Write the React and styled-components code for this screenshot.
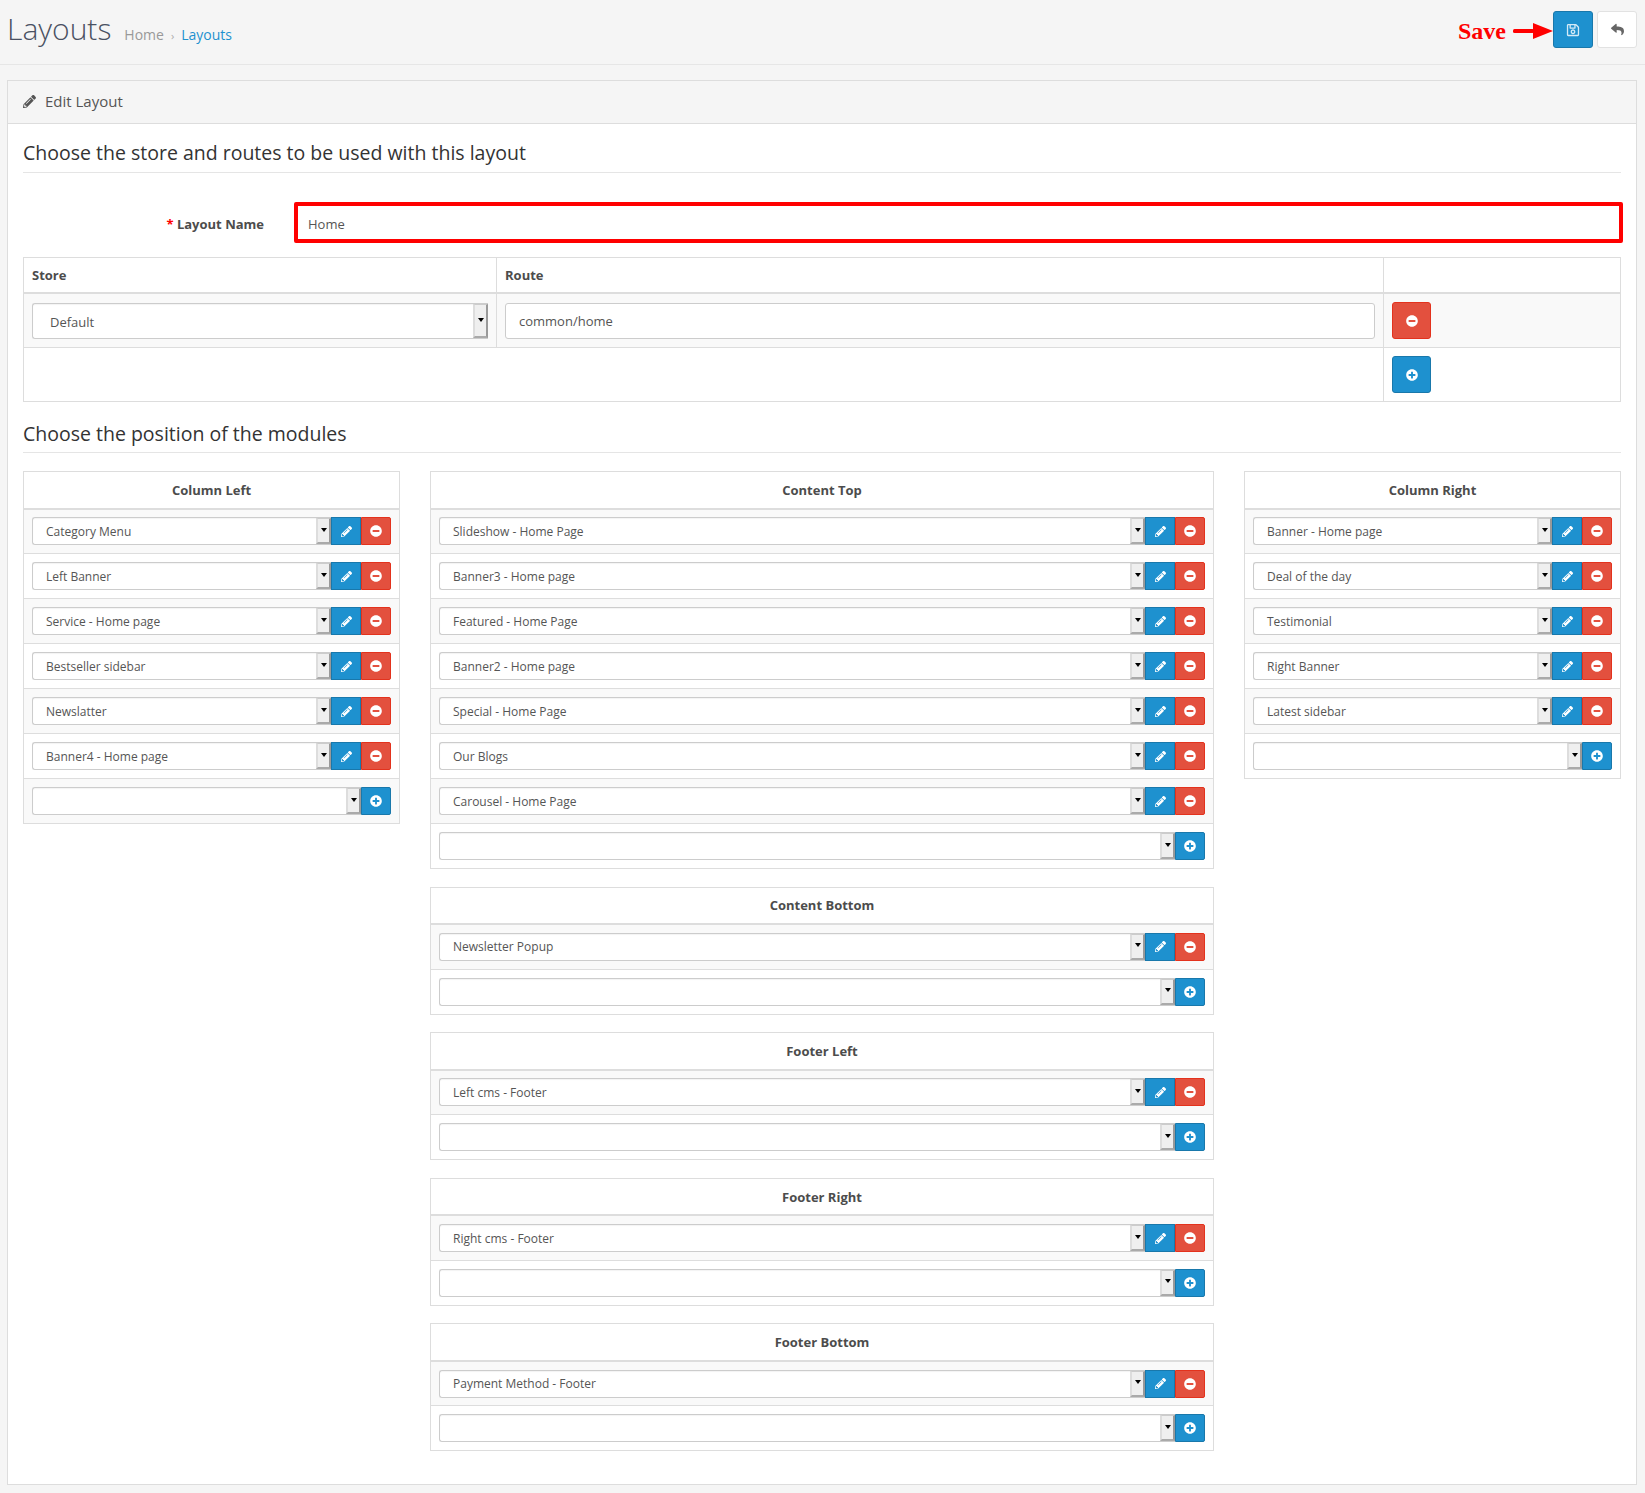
import React from 'react';
import styled, { createGlobalStyle } from 'styled-components';
import { FaPencilAlt, FaMinusCircle, FaPlusCircle, FaRegSave, FaReply } from 'react-icons/fa';

const Global = createGlobalStyle`
  html, body { margin: 0; padding: 0; background: #f5f5f5; }
  body { font-family: "Open Sans", "Liberation Sans", sans-serif; font-size: 12px; color: #555; }
  * { box-sizing: border-box; }
`;

const Page = styled.div`
  width: 1645px;
  height: 1493px;
  overflow: hidden;
`;
const PageHeader = styled.header`
  height: 65px;
  border-bottom: 1px solid #e6e6e6;
  margin-bottom: 15px;
  padding: 11px 8px 0 7px;
  display: flex;
  align-items: flex-start;
  justify-content: space-between;
`;
const TitleGroup = styled.div`
  display: flex;
  align-items: baseline;
  height: 37px;
  margin-top: -1px;
`;
const Title = styled.h1`
  margin: 0;
  font-size: 30px;
  line-height: 37px;
  font-weight: 300;
  color: #4a5162;
`;
const Crumbs = styled.div`
  margin-left: 13px;
  font-size: 14px;
  color: #999;
  display: flex;
  gap: 7px;
  align-items: baseline;
`;
const CrumbSep = styled.span`
  font-size: 11px;
  color: #aaa;
`;
const CrumbLink = styled.span`
  color: #1e91cf;
`;
const Toolbar = styled.div`
  display: flex;
  align-items: center;
`;
const SaveNote = styled.span`
  font-family: "Liberation Serif", serif;
  font-weight: 700;
  font-size: 24px;
  color: #f00;
  margin-right: 7px;
  padding-top: 4px;
`;
const ArrowMark = styled.svg`
  margin-top: 2px;
`;
const ActionButton = styled.button`
  width: 40px;
  height: 37px;
  padding: 0;
  display: flex;
  align-items: center;
  justify-content: center;
  border-radius: 3px;
  border: 1px solid ${p => (p.$light ? '#e2e2e2' : '#1978ab')};
  background: ${p => (p.$light ? '#fff' : '#1e91cf')};
  color: ${p => (p.$light ? '#666' : '#d5ebf7')};
  margin-left: ${p => p.$gap || 0}px;
`;
const Panel = styled.section`
  margin: 0 8px 0 7px;
  border: 1px solid #ddd;
  height: 1405px;
  background: #fff;
`;
const PanelHeading = styled.div`
  height: 43px;
  background: #f5f5f5;
  border-bottom: 1px solid #ddd;
  display: flex;
  align-items: center;
  gap: 9px;
  padding: 0 15px 2px;
  font-size: 15px;
  color: #555;
`;
const PanelBody = styled.div`
  padding: 0 15px;
`;
const Legend = styled.h3`
  margin: ${p => p.$top}px 0 ${p => p.$bottom}px;
  height: 34px;
  line-height: ${p => p.$lh}px;
  font-size: 19.5px;
  font-weight: 400;
  color: #333;
  border-bottom: 1px solid #e5e5e5;
`;
const FormRow = styled.div`
  display: flex;
  align-items: center;
  margin-right: -2px;
  margin-bottom: 14px;
`;
const Label = styled.label`
  width: 241px;
  text-align: right;
  font-size: 13px;
  font-weight: 700;
  color: #4c4c4c;
  margin-right: 30px;
  padding-top: 2px;
`;
const Req = styled.span`
  color: #f00;
`;
const NameField = styled.div`
  flex: 1;
  height: 41px;
  border: 4px solid #f00;
  border-radius: 2px;
  background: #fff;
  padding-left: 10px;
  line-height: 36px;
  font-size: 13px;
  color: #555;
`;
const Table = styled.table`
  width: 100%;
  table-layout: fixed;
  border-collapse: collapse;
  background: #fff;
  margin-bottom: ${p => p.$mb || 0}px;
`;
const Th = styled.th`
  height: ${p => p.$h}px;
  border: 1px solid #ddd;
  border-bottom-width: 2px;
  padding: 0 8px;
  font-size: 13px;
  font-weight: 700;
  color: #4c4c4c;
  text-align: ${p => p.$align || 'left'};
`;
const Td = styled.td`
  height: ${p => p.$h}px;
  border: 1px solid #ddd;
  padding: ${p => p.$padTop || 0}px 8px 0;
  background: ${p => (p.$striped ? '#f9f9f9' : '#fff')};
  vertical-align: middle;
`;
const SelectBox = styled.div`
  flex: 1;
  min-width: 0;
  height: ${p => p.$h || 28}px;
  display: flex;
  align-items: center;
  background: #fff;
  border: 1px solid #ccc;
  border-right: none;
  border-radius: 3px 0 0 3px;
  box-shadow: inset 0 1px 1px rgba(0, 0, 0, 0.05);
  padding-left: ${p => p.$pad || 13}px;
  padding-top: ${p => p.$innerTop || 0}px;
  font-size: ${p => p.$fs || 12}px;
  color: #555;
  position: relative;
`;
const SelectArrow = styled.span`
  position: absolute;
  right: 0;
  top: 0;
  bottom: 0;
  width: 15px;
  background: #efefef;
  border-left: 2px solid #ddd;
  border-top: 1px solid #ccc;
  border-bottom: 2px solid #aaa;
  border-right: 2px solid #999;
  display: flex;
  align-items: center;
  justify-content: center;
  &::after {
    content: '';
    border-left: 3.5px solid transparent;
    border-right: 3.5px solid transparent;
    border-top: 4px solid #000;
    margin-top: -2px;
  }
`;
const RowControls = styled.div`
  display: flex;
  align-items: stretch;
`;
const SquareButton = styled.button`
  width: 30px;
  height: 28px;
  padding: 0;
  display: flex;
  align-items: center;
  justify-content: center;
  color: #fff;
  border: 1px solid ${p => (p.$red ? '#e3321d' : '#1978ab')};
  background: ${p => (p.$red ? '#e3503e' : '#1e91cf')};
  border-radius: ${p => (p.$end ? '0 2px 2px 0' : '0')};
`;
const TextInput = styled.div`
  height: 36px;
  border: 1px solid #ccc;
  border-radius: 3px;
  background: #fff;
  padding-left: 13px;
  line-height: 34px;
  font-size: 13px;
  color: #555;
`;
const BigButton = styled.button`
  width: 39px;
  height: 37px;
  padding: 0;
  display: flex;
  align-items: center;
  justify-content: center;
  color: #fff;
  border-radius: 3px;
  border: 1px solid ${p => (p.$red ? '#e3321d' : '#1978ab')};
  background: ${p => (p.$red ? '#e3503e' : '#1e91cf')};
`;
const ModuleGrid = styled.div`
  display: grid;
  grid-template-columns: 377px 784px 377px;
  column-gap: 30px;
  align-items: start;
  width: 1598px;
`;
const Column = styled.div`
  display: flex;
  flex-direction: column;
`;

const ModuleTable = ({ title, items, mb }) => (
  <Table $mb={mb}>
    <thead>
      <tr>
        <Th $h={37} $align="center">{title}</Th>
      </tr>
    </thead>
    <tbody>
      {items.map((it, i) => (
        <tr key={i}>
          <Td $h={45} $striped={i % 2 === 0}>
            <RowControls>
              <SelectBox>{it}<SelectArrow /></SelectBox>
              <SquareButton><FaPencilAlt size={11} /></SquareButton>
              <SquareButton $red $end><FaMinusCircle size={12} /></SquareButton>
            </RowControls>
          </Td>
        </tr>
      ))}
      <tr>
        <Td $h={45} $striped={items.length % 2 === 0}>
          <RowControls>
            <SelectBox><SelectArrow /></SelectBox>
            <SquareButton $end><FaPlusCircle size={12} /></SquareButton>
          </RowControls>
        </Td>
      </tr>
    </tbody>
  </Table>
);

const left = ['Category Menu', 'Left Banner', 'Service - Home page', 'Bestseller sidebar', 'Newslatter', 'Banner4 - Home page'];
const top = ['Slideshow - Home Page', 'Banner3 - Home page', 'Featured - Home Page', 'Banner2 - Home page', 'Special - Home Page', 'Our Blogs', 'Carousel - Home Page'];
const right = ['Banner - Home page', 'Deal of the day', 'Testimonial', 'Right Banner', 'Latest sidebar'];

export default function App() {
  return (
    <Page>
      <Global />
      <PageHeader>
        <TitleGroup>
          <Title>Layouts</Title>
          <Crumbs>
            <span>Home</span>
            <CrumbSep>›</CrumbSep>
            <CrumbLink>Layouts</CrumbLink>
          </Crumbs>
        </TitleGroup>
        <Toolbar>
          <SaveNote>Save</SaveNote>
          <ArrowMark width="40" height="22" viewBox="0 0 40 22">
            <rect x="0" y="9" width="21" height="4" rx="1.5" fill="#f00" />
            <polygon points="20,3 40,11 20,19" fill="#f00" />
          </ArrowMark>
          <ActionButton><FaRegSave size={14} /></ActionButton>
          <ActionButton $light $gap={4}><FaReply size={13} /></ActionButton>
        </Toolbar>
      </PageHeader>
      <Panel>
        <PanelHeading><FaPencilAlt size={13} />Edit Layout</PanelHeading>
        <PanelBody>
          <Legend $top={15} $bottom={29} $lh={27}>Choose the store and routes to be used with this layout</Legend>
          <FormRow>
            <Label><Req>* </Req>Layout Name</Label>
            <NameField>Home</NameField>
          </FormRow>
          <Table>
            <colgroup>
              <col style={{ width: 473 }} />
              <col />
              <col style={{ width: 237 }} />
            </colgroup>
            <thead>
              <tr>
                <Th $h={35}>Store</Th>
                <Th $h={35}>Route</Th>
                <Th $h={35} />
              </tr>
            </thead>
            <tbody>
              <tr>
                <Td $h={55} $striped $padTop={2}>
                  <RowControls>
                    <SelectBox $h={36} $pad={17} $fs={13} $innerTop={2}>Default<SelectArrow /></SelectBox>
                  </RowControls>
                </Td>
                <Td $h={55} $striped $padTop={2}><TextInput>common/home</TextInput></Td>
                <Td $h={55} $striped $padTop={1}><BigButton $red><FaMinusCircle size={12} /></BigButton></Td>
              </tr>
              <tr>
                <Td $h={54} colSpan={2} />
                <Td $h={54}><BigButton><FaPlusCircle size={12} /></BigButton></Td>
              </tr>
            </tbody>
          </Table>
          <Legend $top={17} $bottom={18} $lh={29}>Choose the position of the modules</Legend>
          <ModuleGrid>
            <Column><ModuleTable title="Column Left" items={left} /></Column>
            <Column>
              <ModuleTable title="Content Top" items={top} mb={17.6} />
              <ModuleTable title="Content Bottom" items={['Newsletter Popup']} mb={17.6} />
              <ModuleTable title="Footer Left" items={['Left cms - Footer']} mb={17.6} />
              <ModuleTable title="Footer Right" items={['Right cms - Footer']} mb={17.6} />
              <ModuleTable title="Footer Bottom" items={['Payment Method - Footer']} />
            </Column>
            <Column><ModuleTable title="Column Right" items={right} /></Column>
          </ModuleGrid>
        </PanelBody>
      </Panel>
    </Page>
  );
}
